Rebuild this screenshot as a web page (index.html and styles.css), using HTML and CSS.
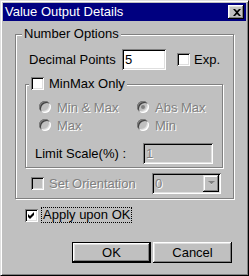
FILE: index.html
```html
<!DOCTYPE html>
<html lang="en">
<head>
    <meta charset="UTF-8">
    <title>Value Output Details</title>
    <link rel="stylesheet" href="styles.css">
</head>
<body>
    <div class="window">
        <div class="titlebar">
            <span class="title">Value Output Details</span>
            <span class="close">
                <svg width="8" height="7" viewBox="0 0 8 7"><path d="M0 0h2l2 2 2-2h2L5 3.5 8 7H6L4 5 2 7H0l3-3.5z" fill="#000"/></svg>
            </span>
        </div>

        <div class="content">
            <fieldset class="group outer">
                <legend>Number Options</legend>

                <div class="row decimal">
                    <span class="label-dec">Decimal Points</span>
                    <span class="field dec-field">5</span>
                    <span class="check exp-check"></span>
                    <span class="exp-label">Exp.</span>
                </div>

                <fieldset class="group inner">
                    <legend><span class="check legend-check"></span><span class="legend-text">MinMax Only</span></legend>

                    <div class="radios">
                        <div class="radio-item disabled"><span class="radio"></span>Min &amp; Max</div>
                        <div class="radio-item disabled"><span class="radio on"></span>Abs Max</div>
                        <div class="radio-item disabled"><span class="radio"></span>Max</div>
                        <div class="radio-item disabled"><span class="radio"></span>Min</div>
                    </div>

                    <div class="row limit">
                        <span class="label-limit">Limit Scale(%) :</span>
                        <span class="field limit-field disabled">1</span>
                    </div>
                </fieldset>

                <div class="row orient">
                    <span class="check off orient-check"></span>
                    <span class="label-orient disabled">Set Orientation</span>
                    <span class="field combo">
                        <span class="combo-value disabled">0</span>
                        <span class="combo-btn">
                            <svg width="7" height="5" viewBox="0 0 7 5"><path d="M1 1h5L3.5 4z" fill="#fff"/><path d="M0 0h7L3.5 3.5z" fill="#808080"/></svg>
                        </span>
                    </span>
                </div>
            </fieldset>

            <div class="row apply">
                <span class="check">
                    <svg width="9" height="9" viewBox="0 0 9 9"><path d="M1 3l2 2 4-4v3l-4 4-2-2z" fill="#000"/></svg>
                </span>
                <span class="apply-label">Apply upon OK</span>
            </div>

            <div class="buttons">
                <button class="btn default">OK</button>
                <button class="btn">Cancel</button>
            </div>
        </div>
    </div>
</body>
</html>
```

FILE: styles.css
```css
body {
    margin: 0;
    font-family: "Liberation Sans", Arial, sans-serif;
    font-size: 13px;
    color: #000;
    background-color: #c0c0c0;
}
.window {
    width: 249px;
    height: 276px;
    box-sizing: border-box;
    padding: 2px;
    border: 1px solid;
    border-color: #dfdfdf #000 #000 #dfdfdf;
    box-shadow: inset 1px 1px #fff, inset -1px -1px #808080;
    background-color: #c0c0c0;
}
.titlebar {
    height: 18px;
    display: flex;
    align-items: center;
    justify-content: space-between;
    padding: 0 2px;
    background-color: #000080;
    color: #fff;
}
.title {
    line-height: 18px;
}
.close {
    width: 16px;
    height: 14px;
    box-sizing: border-box;
    display: flex;
    align-items: center;
    justify-content: center;
    padding-left: 1px;
    background-color: #c0c0c0;
    box-shadow: inset -1px -1px #000, inset 1px 1px #fff, inset -2px -2px #808080, inset 2px 2px #dfdfdf;
}
.content {
    padding: 6px 12px 0;
}
.group {
    margin: 0;
    padding: 0;
    min-width: 0;
    border: 1px solid #808080;
    box-shadow: 1px 1px #fff, inset 1px 1px #fff;
}
.group legend {
    padding: 0 2px;
    line-height: 14px;
    background-color: #c0c0c0;
}
.outer {
    padding-bottom: 4px;
}
.outer > legend {
    margin-left: 6px;
}
.row {
    display: flex;
    align-items: center;
}
.decimal {
    margin: 8px 0 0 13px;
}
.label-dec {
    width: 93px;
}
.field {
    height: 21px;
    box-sizing: border-box;
    display: flex;
    align-items: center;
    padding-left: 3px;
    background-color: #fff;
    box-shadow: inset 1px 1px #808080, inset -1px -1px #fff, inset 2px 2px #000, inset -2px -2px #dfdfdf;
}
.dec-field {
    width: 44px;
}
.check {
    width: 13px;
    height: 13px;
    box-sizing: border-box;
    display: inline-flex;
    align-items: center;
    justify-content: center;
    flex-shrink: 0;
    background-color: #fff;
    box-shadow: inset 1px 1px #808080, inset -1px -1px #fff, inset 2px 2px #000, inset -2px -2px #dfdfdf;
}
.check.off {
    background-color: #c0c0c0;
}
.exp-check {
    margin-left: 11px;
}
.exp-label {
    margin-left: 4px;
}
.inner {
    width: 198px;
    box-sizing: border-box;
    margin: 7px 0 0 9px;
    padding-bottom: 3px;
}
.inner > legend {
    margin-left: 3px;
    line-height: 14px;
}
.legend-check {
    vertical-align: -2px;
}
.legend-text {
    margin-left: 5px;
}
.radios {
    display: grid;
    grid-template-columns: 98px auto;
    grid-auto-rows: 18px;
    margin-top: 7px;
    padding-left: 13px;
}
.radio-item {
    display: flex;
    align-items: center;
    gap: 6px;
}
.radio {
    width: 12px;
    height: 12px;
    box-sizing: border-box;
    border-radius: 50%;
    display: flex;
    align-items: center;
    justify-content: center;
    background-color: #c0c0c0;
    text-shadow: none;
    box-shadow: inset 1px 1px #808080, inset -1px -1px #fff, inset 2px 2px #404040, inset -2px -2px #dfdfdf;
}
.radio.on::after {
    content: "";
    width: 4px;
    height: 4px;
    border-radius: 50%;
    background-color: #808080;
}
.disabled {
    color: #808080;
    text-shadow: 1px 1px 0 #fff;
}
.limit {
    margin: 9px 0 0 9px;
}
.label-limit {
    width: 108px;
}
.limit-field {
    width: 70px;
    background-color: #c0c0c0;
}
.orient {
    margin: 5px 0 0 15px;
}
.label-orient {
    width: 103px;
    margin-left: 5px;
}
.combo {
    width: 69px;
    justify-content: space-between;
    padding-right: 2px;
    background-color: #c0c0c0;
}
.combo-btn {
    width: 16px;
    height: 17px;
    box-sizing: border-box;
    display: flex;
    align-items: center;
    justify-content: center;
    box-shadow: inset -1px -1px #000, inset 1px 1px #dfdfdf, inset -2px -2px #808080, inset 2px 2px #fff;
}
.apply {
    margin: 9px 0 0 10px;
}
.apply-label {
    margin-left: 4px;
    padding: 0 1px;
    line-height: 14px;
    outline: 1px dotted #000;
}
.buttons {
    display: flex;
    justify-content: flex-end;
    gap: 2px;
    margin-top: 20px;
    padding-right: 2px;
}
.btn {
    width: 79px;
    height: 21px;
    padding: 0;
    border: none;
    font-family: inherit;
    font-size: 13px;
    color: #000;
    background-color: #c0c0c0;
    box-shadow: inset -1px -1px #000, inset 1px 1px #fff, inset -2px -2px #808080, inset 2px 2px #dfdfdf;
}
.btn.default {
    box-shadow: inset 0 0 0 1px #000, inset -2px -2px #000, inset 2px 2px #fff, inset -3px -3px #808080, inset 3px 3px #dfdfdf;
}
```
